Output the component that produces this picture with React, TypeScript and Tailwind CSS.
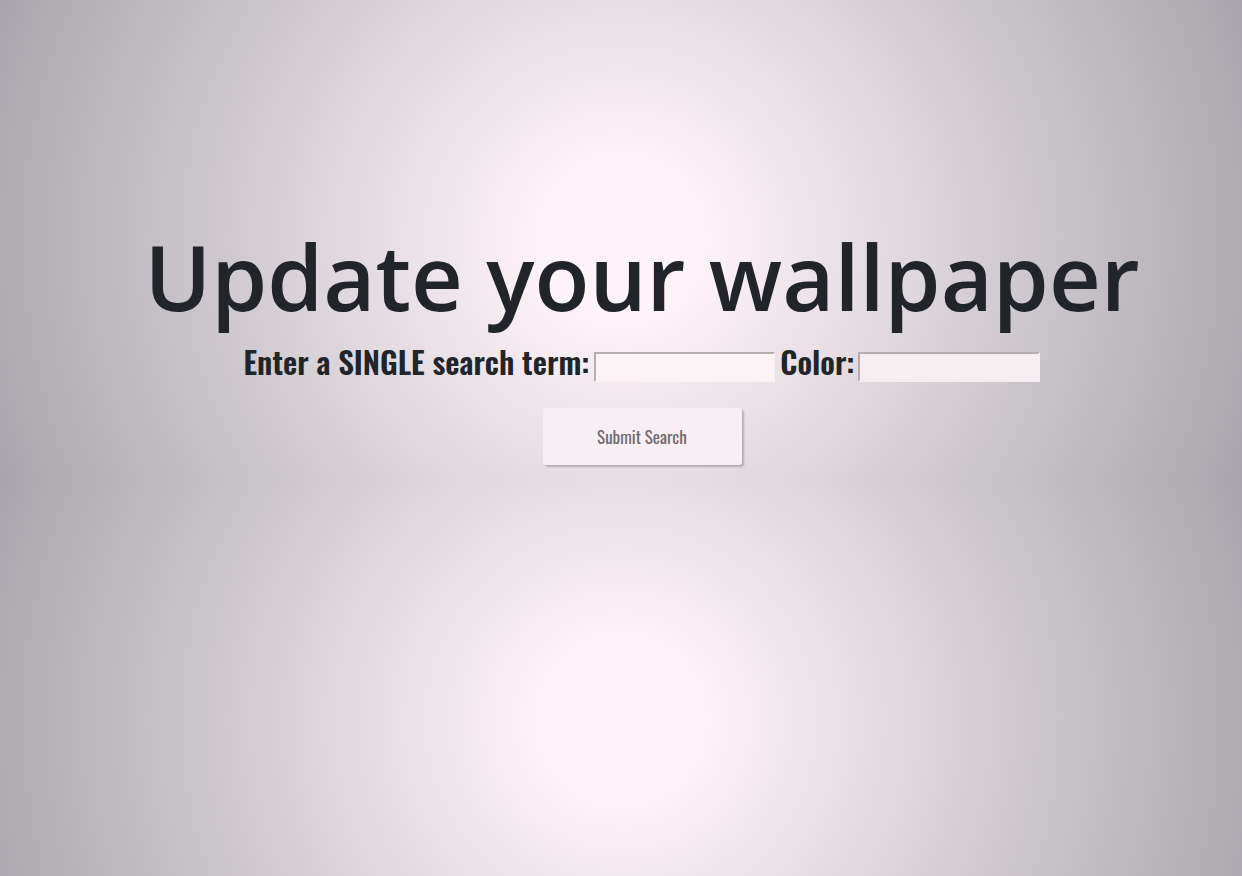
import React from "react";

export default function App() {
  return (
    <div className="h-[876px] w-full overflow-hidden bg-[radial-gradient(circle_at_center,#fdf3f8_12%,#a8a6ac_100%)] [background-size:100%_480px] bg-repeat">
      <div className="flex flex-col items-center pl-[42px] pt-[218px]">
        <h1 className="font-['Open_Sans',sans-serif] text-[90px] leading-[116px] font-semibold text-[#212529]">
          Update your wallpaper
        </h1>
        <form
          className="mt-[5px] flex items-center"
          onSubmit={(e) => e.preventDefault()}
        >
          <label className="font-['Oswald',sans-serif] text-[31px] leading-[44px] font-semibold text-[#212529]">
            Enter a SINGLE search term:
          </label>
          <input
            type="text"
            className="ml-[5px] mt-[11px] h-[30px] w-[181px] border-t-2 border-l-2 border-r-2 border-b-2 border-t-[#b4adb2] border-l-[#b4adb2] border-r-[#fbf2f6] border-b-[#fbf2f6] bg-[#fcf3f7] outline-none"
          />
          <label className="ml-[5px] font-['Oswald',sans-serif] text-[31px] leading-[44px] font-semibold text-[#212529]">
            Color:
          </label>
          <input
            type="text"
            className="ml-[4px] mt-[11px] h-[30px] w-[182px] border-t-2 border-l-2 border-r-2 border-b-2 border-t-[#b4adb2] border-l-[#b4adb2] border-r-[#f5edf1] border-b-[#f5edf1] bg-[#f7eef2] outline-none"
          />
        </form>
        <button
          type="button"
          className="mt-[25px] h-[57px] w-[199px] rounded-[3px] bg-[#f8eff4] font-['Oswald',sans-serif] text-[17px] font-normal text-[#6d6a70] shadow-[2px_2px_2px_rgba(90,80,90,0.35)]"
        >
          Submit Search
        </button>
      </div>
    </div>
  );
}
